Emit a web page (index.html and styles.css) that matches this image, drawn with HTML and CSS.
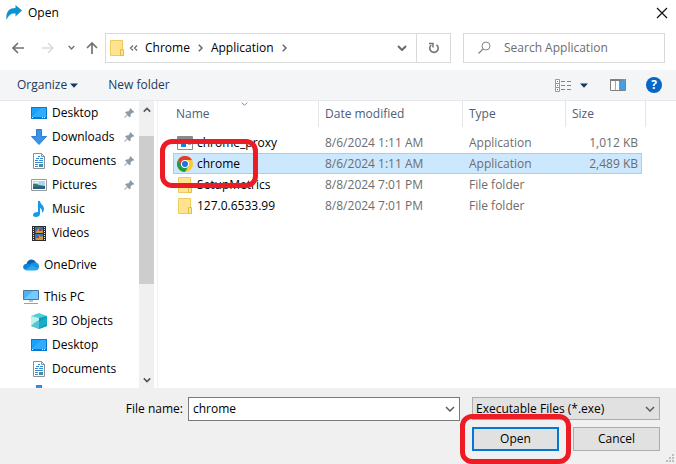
FILE: index.html
```html
<!DOCTYPE html>
<html lang="en">
<head>
<meta charset="utf-8">
<title>Open</title>
<link rel="stylesheet" href="styles.css">
</head>
<body>
<svg class="defs" aria-hidden="true">
  <symbol id="desktop" viewBox="0 0 16 16"><path d="M0 2h16v12H0z" fill="#0b78cf"/><path d="M1 3h14v9H1z" fill="#19a0fa"/><path d="M1 12L10 3h5v9z" fill="#30adff"/><path d="M1 12.500h1M11 12.500h1M13 12.500h1" stroke="#fff"/></symbol>
  <symbol id="download" viewBox="0 0 16 16"><path d="M5.500.500h5v7h5L8 15.500.500 7.500h5z" fill="#3b93e6" stroke="#2c7fd0"/></symbol>
  <symbol id="document" viewBox="0 0 16 16"><path d="M2.500.500h8l3 3v12h-11z" fill="#fff" stroke="#8a8f94"/><path d="M10.500.500v3h3" fill="none" stroke="#8a8f94"/><path d="M7 3.500h2M5 5.500h3M9 5.500h3M4 7.500h3M8 7.500h4M4 9.500h8M4 13.500h3" stroke="#2f8ad8"/><path d="M8 11h4v3H8z" fill="#3c8fae"/><path d="M4 11.500h3" stroke="#6f7e8c"/></symbol>
  <symbol id="picture" viewBox="0 0 16 16"><path d="M.500 2.500h15v11H.500z" fill="#fff" stroke="#9a9a9a"/><path d="M2 4h12v8H2z" fill="#a9d7f0"/><path d="M2 7q3-1 6 1l6 1v3H2z" fill="#3c7a70"/><path d="M2 10l12-1v3H2z" fill="#265e8c"/><path d="M3 5h5v1H3z" fill="#e8f6fc"/></symbol>
  <symbol id="music" viewBox="0 0 16 16"><path d="M7 0h2c0 3 4 4 4 8 0 2-1 3-2 4 .5-3-.500-4-2-5v6c0 2-2 3-4 3s-3-1-3-2c0-2 2-3 5-3z" fill="#139bea"/></symbol>
  <symbol id="video" viewBox="0 0 16 16"><path d="M1 1h14v15H1z" fill="#2c2c30"/><path d="M4 2h8v6H4z" fill="#376fc3"/><path d="M4 9h8v6H4z" fill="#3178d2"/><path d="M5 7l3-4 2 3 2-1v3H5zM5 14l3-4 2 2 2-1v4H5z" fill="#d69b2e"/><path d="M8 4h2v2H8zM6 11h2v2H6z" fill="#b43a36"/><path d="M2.500 2v13M13.500 2v13" stroke="#e8e8e8" stroke-dasharray="1 1"/></symbol>
  <symbol id="cloud" viewBox="0 0 16 16"><path d="M3.500 7C4 4 6 2.500 8.500 2.500c2 0 3.500 1 4.500 3L9 9z" fill="#0a64b5"/><path d="M3 13c-4-.500-4-6 1-6.200 2-.300 4 1 8 4L9 13z" fill="#1180d8"/><path d="M6 9c2-3 4-4 7-3.500 2 .500 3 2 3 4 0 2-1.500 3.500-3 3.500z" fill="#1891e4"/><path d="M2 12.500l7-4 6.500 3c-.500 1-1.500 2-3 2H4c-1 0-1.500-.500-2-1z" fill="#29a8ed"/></symbol>
  <symbol id="pc" viewBox="0 0 16 16"><path d="M.500 1.500h15v9H.500z" fill="#4eb2f6" stroke="#477c9e"/><path d="M1 10l9-8h5v8z" fill="#74cbff"/><path d="M6 11h4v2H6z" fill="#b5c3cf"/><path d="M1 14.500h14" stroke="#8fa2b4"/></symbol>
  <symbol id="cube" viewBox="0 0 16 16"><path d="M8 0l8 3v10l-8 3-8-3V3z" fill="#4ccfdb"/><path d="M0 3l8 2v11l-8-3z" fill="#c1f0f1"/><path d="M3 10l5-3v9l-8-3z" fill="#54c4ce"/><path d="M16 3L8 5v11l8-3z" fill="#0d9dae"/><path d="M8 9l8-5v7l-8 4z" fill="#17adc9"/></symbol>
  <symbol id="pin" viewBox="0 0 12 12"><path d="M7 1l4 4-1 .500-1 0-2 2 0 2-1 1-2.300-2.300L1 11l-.500-.500L3.500 7.500 1.500 5.500l1-1 2 0 2-2V1.500z" fill="#8d9aa7" stroke="#8d9aa7" stroke-width=".500"/></symbol>
  <symbol id="folder" viewBox="0 0 14 16"><path d="M.500.500h12v15H.500z" fill="#ffe391" stroke="#edcb5c"/><path d="M10.500 9.500h3v6h-3z" fill="#ffe391" stroke="#e3bd42"/></symbol>
  <symbol id="chev" viewBox="0 0 10 6"><path d="M1 1l4 4 4-4" fill="none" stroke="currentColor" stroke-width="var(--w, 1.500)"/></symbol>
  <symbol id="tri" viewBox="0 0 8 5"><path d="M0 .500h8L4 4.800z" fill="#17375e"/></symbol>
  <symbol id="next" viewBox="0 0 5 8"><path d="M.800.800L4 4 .800 7.200" fill="none" stroke="#686868" stroke-width="1.500"/></symbol>
</svg>
<main class="dialog">
  <header class="titlebar">
    <svg class="i16" viewBox="0 0 16 16"><path d="M9.500 0L16 5.500 9.500 11.500V8.500C6 8 3 9 .500 15-.500 7 3 3 9.500 3z" fill="#0c92ce"/></svg>
    <h1>Open</h1>
    <button class="close" aria-label="Close"><svg width="12" height="12" viewBox="0 0 12 12"><path d="M1 1l10 10M11 1L1 11" stroke="#111" stroke-width="1.200"/></svg></button>
  </header>
  <nav class="navbar">
    <div class="arrows">
      <button aria-label="Back"><svg width="12" height="12" viewBox="0 0 12 12"><path d="M12 6H1M6 1L1 6l5 5" fill="none" stroke="#727272" stroke-width="1.700"/></svg></button>
      <button aria-label="Forward"><svg width="12" height="12" viewBox="0 0 12 12"><path d="M0 6h11M6 1l5 5-5 5" fill="none" stroke="#dadada" stroke-width="1.500"/></svg></button>
      <button class="recent" aria-label="Recent locations"><svg class="heavy" width="7" height="5"><use href="#chev"/></svg></button>
      <button aria-label="Up"><svg width="12" height="12" viewBox="0 0 12 12"><path d="M6 12V1M1 6l5-5 5 5" fill="none" stroke="#727272" stroke-width="1.700"/></svg></button>
    </div>
    <div class="address">
      <svg class="fold"><use href="#folder"/></svg>
      <svg class="back2" viewBox="0 0 9 6"><path d="M4 .500L1.500 3 4 5.500M8 .500L5.500 3 8 5.500" fill="none" stroke="#686868" stroke-width="1.200"/></svg>
      <button>Chrome</button>
      <svg class="next"><use href="#next"/></svg>
      <button>Application</button>
      <svg class="next"><use href="#next"/></svg>
      <button class="history" aria-label="Previous locations"><svg class="chev heavy"><use href="#chev"/></svg></button>
      <button class="refresh" aria-label="Refresh"><svg width="12" height="12" viewBox="0 0 12 12"><path d="M8.500 2.800A4.200 4.200 0 1 1 3.200 3" fill="none" stroke="#747474" stroke-width="1.600"/><path d="M1 1.500h4v4" fill="none" stroke="#747474" stroke-width="1.500"/></svg></button>
    </div>
    <label class="search">
      <svg width="13" height="13" viewBox="0 0 13 13"><circle cx="8" cy="5" r="4" fill="none" stroke="#858585"/><path d="M5 8L.500 12.500" stroke="#858585" stroke-width="1.200"/></svg>
      <input type="text" placeholder="Search Application" aria-label="Search Application">
    </label>
  </nav>
  <div class="toolbar">
    <button class="organize">Organize <svg class="tri"><use href="#tri"/></svg></button>
    <button>New folder</button>
    <div class="tools">
      <button aria-label="Change view"><svg width="16" height="13" viewBox="0 0 16 13"><path d="M.500.500h4v12h-4zM.500 4.500h4M.500 8.500h4" fill="#fff" stroke="#9a9a9a"/><path d="M2 2.500h1M2 6.500h1" stroke="#4a86c5"/><path d="M2 10.500h1" stroke="#c24242"/><path d="M6 2.500h4M12 2.500h4M6 6.500h4M12 6.500h4M6 10.500h4M12 10.500h4" stroke="#858585"/></svg></button>
      <button class="more" aria-label="More view options"><svg class="tri"><use href="#tri"/></svg></button>
      <button class="preview" aria-label="Show the preview pane"><svg width="16" height="12" viewBox="0 0 16 12"><path d="M.500.500h15v11H.500z" fill="#fff" stroke="#808080"/><path d="M0 1h16" stroke="#808080" stroke-width="2"/><path d="M5.500 2v9" stroke="#a8a8a8"/><path d="M9 2h6v9H9z" fill="#41a0e8"/><path d="M12 1h1M14 1h1" stroke="#7cc9ff"/></svg></button>
      <button class="help" aria-label="Help">?</button>
    </div>
  </div>
  <div class="body">
    <aside class="sidebar">
      <ul class="places">
        <li><svg class="i16"><use href="#desktop"/></svg><a href="#">Desktop</a><svg class="pin"><use href="#pin"/></svg></li>
        <li><svg class="i16"><use href="#download"/></svg><a href="#">Downloads</a><svg class="pin"><use href="#pin"/></svg></li>
        <li><svg class="i16"><use href="#document"/></svg><a href="#">Documents</a><svg class="pin"><use href="#pin"/></svg></li>
        <li><svg class="i16"><use href="#picture"/></svg><a href="#">Pictures</a><svg class="pin"><use href="#pin"/></svg></li>
        <li><svg class="i16"><use href="#music"/></svg><a href="#">Music</a></li>
        <li><svg class="i16"><use href="#video"/></svg><a href="#">Videos</a></li>
        <li class="root"><svg class="i16"><use href="#cloud"/></svg><a href="#">OneDrive</a></li>
        <li class="root"><svg class="i16"><use href="#pc"/></svg><a href="#">This PC</a></li>
        <li><svg class="i16"><use href="#cube"/></svg><a href="#">3D Objects</a></li>
        <li><svg class="i16"><use href="#desktop"/></svg><a href="#">Desktop</a></li>
        <li><svg class="i16"><use href="#document"/></svg><a href="#">Documents</a></li>
        <li><svg class="i16"><use href="#download"/></svg></li>
      </ul>
      <div class="scrollbar">
        <button aria-label="Scroll up"><svg class="up heavy"><use href="#chev"/></svg></button>
        <div class="track"><div class="thumb"></div></div>
        <button aria-label="Scroll down"><svg class="down heavy"><use href="#chev"/></svg></button>
      </div>
    </aside>
    <section class="files">
      <table>
        <colgroup><col class="c-name"><col class="c-date"><col class="c-type"><col class="c-size"><col class="c-end"></colgroup>
        <thead><tr><th><svg class="sort"><use href="#chev"/></svg>Name</th><th>Date modified</th><th>Type</th><th class="size">Size</th><td class="end"></td></tr></thead>
        <tbody>
          <tr><td><div class="file"><svg class="i16" viewBox="0 0 16 16"><path d="M.500 1.500h15v13H.500z" fill="#fff" stroke="#8b8b8b"/><path d="M0 2h16v2H0z" fill="#858b92"/><path d="M4 6h5v6H4z" fill="#1683d8"/><path d="M11 7h3M11 9.500h3" stroke="#a9a9a9"/></svg>chrome_proxy</div></td><td>8/6/2024 1:11 AM</td><td>Application</td><td>1,012 KB</td></tr>
          <tr class="selected"><td><div class="file marked"><svg class="i16" viewBox="0 0 16 16"><circle cx="8" cy="8" r="8" fill="#fcc934"/><path d="M1.070 4A8 8 0 0 1 14.930 4H8L4.540 10z" fill="#e33b2e"/><path d="M1.070 4A8 8 0 0 0 8 16L11.460 10H4.540z" fill="#229a4d"/><circle cx="8" cy="8" r="4" fill="#fff"/><circle cx="8" cy="8" r="3" fill="#1a73e8"/></svg>chrome</div></td><td>8/6/2024 1:11 AM</td><td>Application</td><td>2,489 KB</td></tr>
          <tr><td><div class="file"><svg class="fold"><use href="#folder"/></svg>SetupMetrics</div></td><td>8/8/2024 7:01 PM</td><td>File folder</td><td></td></tr>
          <tr><td><div class="file"><svg class="fold"><use href="#folder"/></svg>127.0.6533.99</div></td><td>8/8/2024 7:01 PM</td><td>File folder</td><td></td></tr>
        </tbody>
      </table>
    </section>
  </div>
  <footer class="footer">
    <label for="filename">File name:</label>
    <div class="combo"><input id="filename" type="text" value="chrome"><svg class="chev"><use href="#chev"/></svg></div>
    <div class="actions">
      <div class="type"><select aria-label="File type"><option>Executable Files (*.exe)</option></select><svg class="chev"><use href="#chev"/></svg></div>
      <div class="marked"><button class="btn primary">Open</button></div>
      <button class="btn">Cancel</button>
    </div>
    <svg class="grip" viewBox="0 0 8 8"><path d="M6 0h2v2H6zM3 3h2v2H3zM6 3h2v2H6zM0 6h2v2H0zM3 6h2v2H3zM6 6h2v2H6z" fill="#bdbdbd"/></svg>
  </footer>
</main>
</body>
</html>
```
FILE: styles.css
```css
* { box-sizing: border-box; }
body { margin: 0; background: #fff; color: #000; font: 12px/16px "Open Sans", "Noto Sans", sans-serif; }
button, input, select { font: inherit; color: inherit; margin: 0; padding: 0; border: 0; background: none; }
button { display: flex; align-items: center; justify-content: center; white-space: nowrap; }
svg { display: block; flex: none; }
.defs { position: absolute; width: 0; height: 0; }
.dialog { display: flex; flex-direction: column; min-height: 100vh; overflow: hidden; }
.i16 { width: 16px; height: 16px; }
.fold { width: 14px; height: 16px; }
.chev { width: 10px; height: 6px; color: #5c5c5c; }
.heavy { --w: 2; }
.tri { width: 8px; height: 5px; }

.titlebar { display: flex; align-items: center; height: 25px; padding: 0 8px 0 6px; gap: 6px; }
.titlebar h1 { margin: 0; font-size: 12px; font-weight: 400; }
.close { margin-left: auto; }

.navbar { display: flex; align-items: center; height: 45px; padding: 0 11px 0 12px; }
.arrows { display: flex; align-items: center; width: 93px; }
.arrows button + button { margin-left: 18px; }
.arrows .recent { margin: 0 11px 0 14px; color: #727272; }
.arrows .recent + button { margin-left: 0; }
.address { flex: 1; display: flex; align-items: center; height: 30px; border: 1px solid #d9d9d9; padding-left: 4px; }
.back2 { width: 9px; height: 6px; margin: 0 7px 0 5px; }
.next { width: 5px; height: 8px; margin: 0 8px; }
.history { margin-left: auto; padding: 0 9px; }
.history .chev { color: #6b6b6b; }
.refresh { width: 34px; height: 28px; border-left: 1px solid #d9d9d9; }
.search { display: flex; align-items: center; gap: 13px; width: 202px; height: 30px; margin-left: 12px; padding-left: 14px; border: 1px solid #d9d9d9; }
.search input { flex: 1; min-width: 0; outline: 0; }
.search input::placeholder { color: #6d6d6d; opacity: 1; }

.toolbar { display: flex; align-items: center; height: 31px; padding: 0 14px 0 17px; background: #f4f5f7; border-bottom: 1px solid #e6e8eb; color: #1e395b; }
.organize { gap: 3px; margin-right: 30px; }
.tools { display: flex; align-items: center; margin-left: auto; }
.more { margin-left: 9px; }
.preview { margin: 0 20px 0 22px; }
.help { width: 16px; height: 16px; border-radius: 50%; background: #0567c6; color: #fff; font-weight: 700; }

.body { flex: 1 1 0px; display: flex; min-height: 287px; }
.sidebar { display: flex; width: 158px; border-right: 1px solid #f0f0f0; padding-right: 3px; overflow: hidden; }
.places { flex: 1; list-style: none; margin: 0; padding: 0; overflow: hidden; }
.places li { display: flex; align-items: center; height: 24px; padding: 0 4px 0 31px; gap: 5px; }
.places .root { height: 32px; padding: 8px 4px 0 23px; }
.places a { color: inherit; text-decoration: none; }
.pin { width: 11px; height: 12px; margin-left: auto; }
.scrollbar { display: flex; flex-direction: column; width: 15px; background: #f0f0f0; }
.scrollbar button { height: 17px; }
.up, .down { width: 8px; height: 6px; color: #555; }
.up { transform: rotate(180deg); }
.track { flex: 1; padding-top: 18px; }
.thumb { height: 63%; background: #cdcdcd; }

.files { flex: 1; min-width: 0; padding-left: 15px; }
table { table-layout: fixed; width: 473px; border-collapse: separate; border-spacing: 0; }
.c-name { width: 146px; }
.c-date { width: 144px; }
.c-type { width: 103px; }
.c-size { width: 76px; }
.c-end { width: 4px; }
th, td { padding: 0 0 0 6px; text-align: left; white-space: nowrap; }
th { position: relative; height: 26px; font-weight: 400; color: #4c607a; border-right: 1px solid #e5e5e5; }
th:first-child { padding-left: 3px; }
th.size { border-right: 0; }
thead .end { padding: 0; border-right: 1px solid #e5e5e5; }
.sort { position: absolute; top: 1px; left: 50%; width: 7px; height: 4px; margin-left: -5px; color: #8c8c8c; }
thead::after { content: ""; display: block; height: 5px; }
tbody td { height: 21px; color: #6d6d6d; }
tbody td:first-child { padding-left: 4px; color: #000; }
tbody td:nth-child(4) { text-align: right; padding: 0 4px 0 0; }
.file { display: flex; align-items: center; gap: 4px; height: 19px; }
.file .fold { margin: 0 1px; }
.selected td { background: #cce8ff; border: solid #99d1ff; border-width: 1px 0; }
.selected td:first-child { border-left-width: 1px; padding-left: 3px; }
.selected td:nth-child(4) { border-right-width: 1px; padding-right: 3px; }
.marked { position: relative; }
.marked::after { content: ""; position: absolute; inset: -13px -12px; border: 5px solid #ed1c24; border-radius: 12px; pointer-events: none; }
.file.marked { width: 64px; }
.file.marked::after { inset: -15px -17px; }

.footer { position: relative; display: grid; grid-template-columns: 183px 1fr 188px; column-gap: 5px; min-height: 76px; padding: 9px 16px 12px 0; background: #f0f0f0; align-items: start; }
.footer label { text-align: right; padding-top: 4px; }
.combo { display: flex; align-items: center; height: 24px; margin-right: 7px; padding-right: 4px; border: 1px solid #7a7a7a; background: #fff; }
.combo input { flex: 1; min-width: 0; padding-left: 4px; outline: 0; }
.actions { display: grid; grid-template-columns: 1fr 1fr; gap: 7px 14px; }
.type { grid-column: 1 / -1; display: grid; align-items: center; height: 23px; border: 1px solid #adadad; background: #e1e1e1; }
.type select { grid-area: 1 / 1; width: 100%; height: 21px; padding-left: 3px; appearance: none; }
.type .chev { grid-area: 1 / 1; justify-self: end; margin-right: 4px; pointer-events: none; }
.btn { width: 100%; height: 24px; border: 1px solid #adadad; background: #e1e1e1; }
.primary { border: 2px solid #0078d7; }
.grip { position: absolute; right: 2px; bottom: 2px; width: 8px; height: 8px; }
```
